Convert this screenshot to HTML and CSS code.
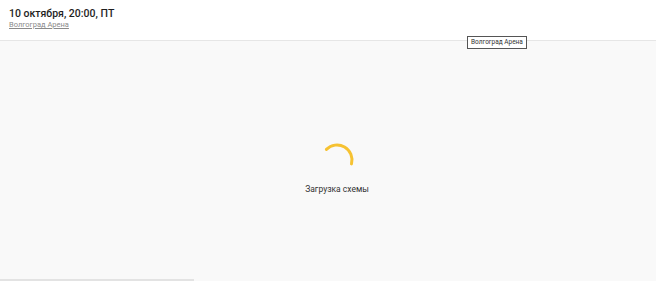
FILE: index.html
```html
<!DOCTYPE html>
<html lang="ru">
<head>
    <meta charset="UTF-8">
    <meta name="viewport" content="width=device-width, initial-scale=1.0">
    <title>Схема зала</title>
    <link rel="stylesheet" href="styles.css">
</head>
<body>
    <div class="event-header">
        <div class="event-date">10 октября, 20:00, ПТ</div>
        <a class="event-place" href="#">Волгоград Арена</a>
    </div>
    <div class="tooltip">Волгоград Арена</div>
    <div class="scheme">
        <div class="loader">
            <svg class="spinner" width="36" height="36" viewBox="0 0 36 36">
                <path d="M7.4 7.4 A15 15 0 0 1 32.5 21.9" fill="none" stroke="#f6c232" stroke-width="3" stroke-linecap="round"/>
            </svg>
            <p class="loader-text">Загрузка схемы</p>
        </div>
        <div class="scrollbar"><div class="scrollbar-thumb"></div></div>
    </div>
</body>
</html>
```
FILE: styles.css
```css
html, body {
    margin: 0;
    height: 100%;
}
body {
    font-family: Roboto, "Noto Sans", sans-serif;
    display: flex;
    flex-direction: column;
    background: #f9f9f9;
    position: relative;
}
.event-header {
    flex-shrink: 0;
    height: 41px;
    box-sizing: border-box;
    padding: 7px 9px 0;
    background: #fff;
    border-bottom: 1px solid #e6e6e6;
}
.event-date {
    font-size: 10.5px;
    font-weight: 500;
    color: #1e1e1e;
    line-height: 13px;
}
.event-place {
    display: block;
    width: fit-content;
    font-size: 7.5px;
    color: #8a8a8a;
    text-decoration: underline;
    line-height: 9px;
}
.tooltip {
    position: absolute;
    left: 467px;
    top: 36px;
    padding: 1px 3px;
    background: #fff;
    border: 1px solid #555;
    font-size: 6.5px;
    line-height: 9px;
    color: #333;
}
.scheme {
    flex: 1;
    display: flex;
    flex-direction: column;
}
.loader {
    flex: 1;
    display: flex;
    flex-direction: column;
    align-items: center;
    padding-top: 101px;
    padding-left: 18px;
}
.spinner {
    display: block;
}
.loader-text {
    margin: 6px 0 0;
    font-size: 8.5px;
    color: #333;
}
.scrollbar {
    height: 2px;
}
.scrollbar-thumb {
    width: 194px;
    height: 2px;
    background: #e3e3e3;
}
```
